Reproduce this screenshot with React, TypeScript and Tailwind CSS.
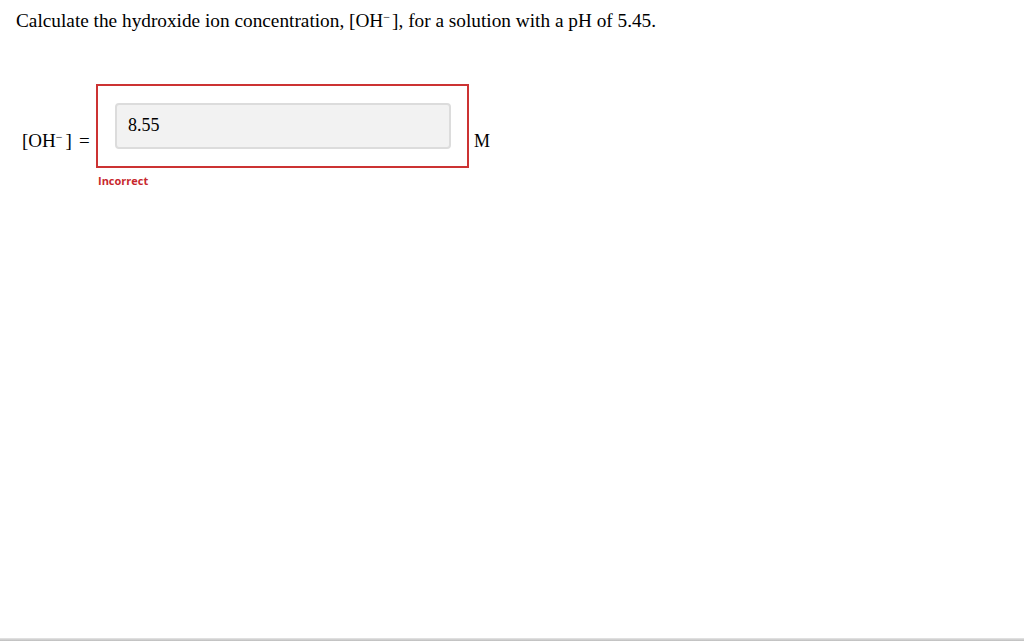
const App = () => {
  return (
    <div className="relative h-[641px] w-[1024px] overflow-hidden bg-white font-['Liberation_Serif',serif] text-black">
      <div className="px-4 pt-[8px]">
        <p className="text-[19.3px] leading-[26px]">
          Calculate the hydroxide ion concentration, [OH<sup className="mr-[2px] text-[12px]">−</sup>], for a solution with a pH of 5.45.
        </p>
        <div className="mt-[50px] flex items-start">
          <div className="mt-[46px] flex w-[80px] pl-[6px] text-[19px] leading-[22px]">
            <span>
              [OH<sup className="mr-[3px] text-[12px]">−</sup>]
            </span>
            <span className="ml-[7px]">=</span>
          </div>
          <div className="flex flex-col">
            <div className="flex h-[84px] w-[373px] items-center border-2 border-[#cc3333] pl-[17px]">
              <div className="flex h-[46px] w-[336px] items-center rounded border-2 border-[#dcdcdc] bg-[#f2f2f2] pb-[1px] pl-[11px] font-['Liberation_Serif',serif] text-[18px]">
                8.55
              </div>
            </div>
            <div className="mt-[5px] pl-[2px] font-['Open_Sans',sans-serif] text-[11px] font-bold text-[#c8282d]">
              Incorrect
            </div>
          </div>
          <div className="mt-[46px] pl-[5px] text-[18px] leading-[22px]">M</div>
        </div>
      </div>
      <div className="absolute bottom-0 left-0 h-[3px] w-full bg-gradient-to-b from-[#e6e6e6] to-[#bdbdbd]" />
    </div>
  );
};

export default App;
